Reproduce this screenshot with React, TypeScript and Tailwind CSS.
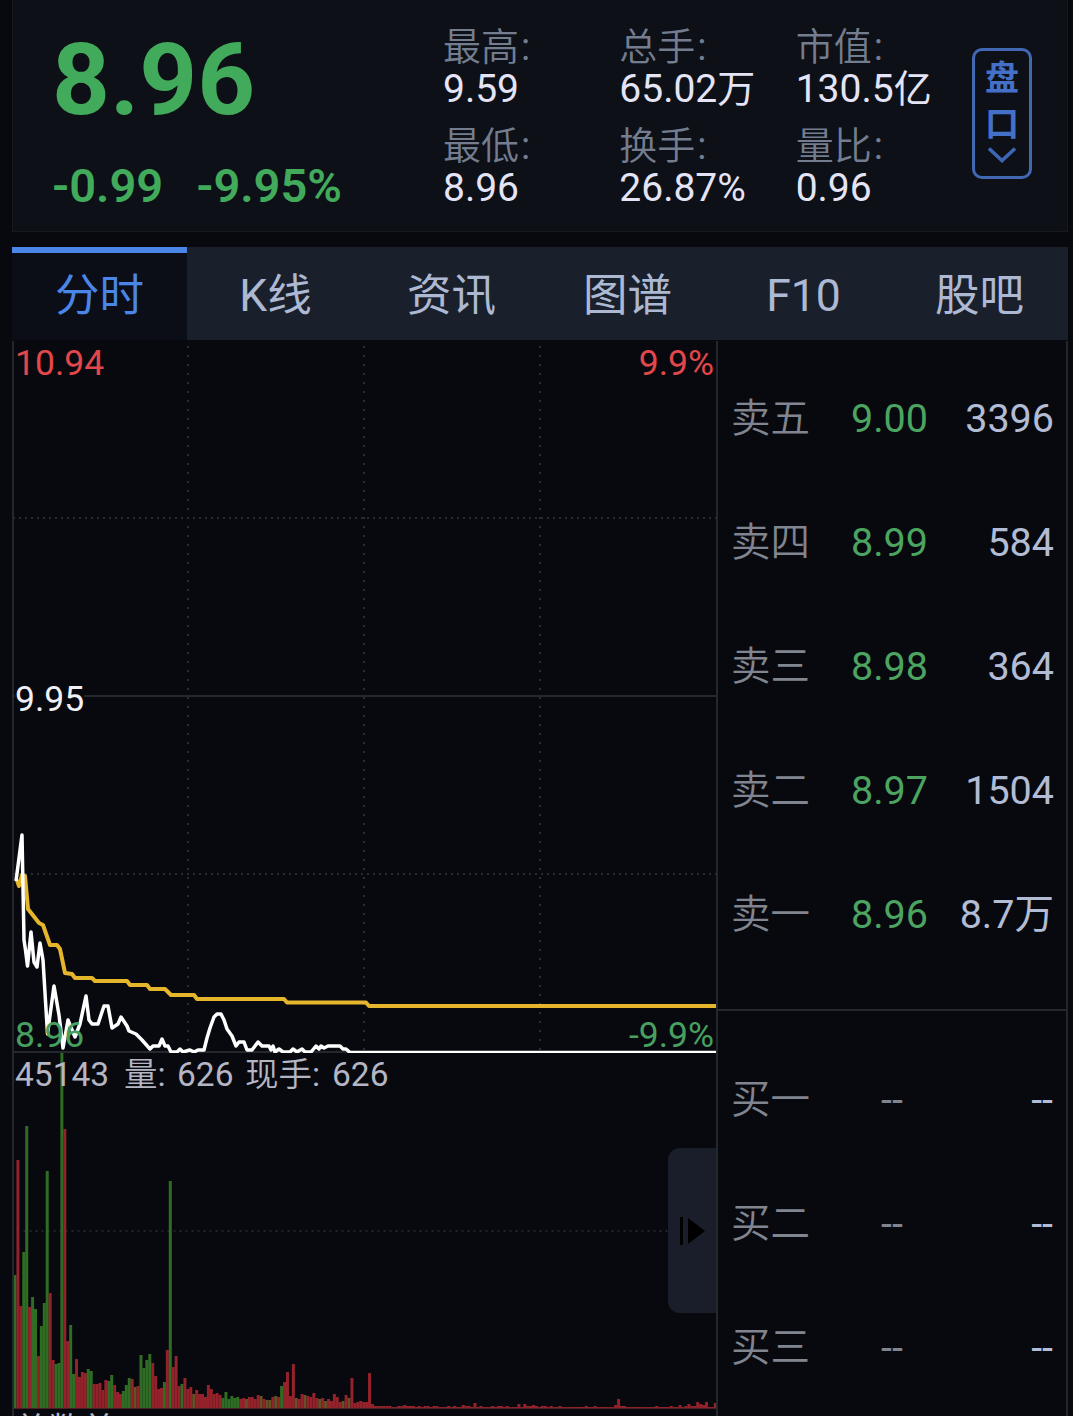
import { FC } from 'react'

const stats = [
	{ label: '最高', value: '9.59' },
	{ label: '总手', value: '65.02', unit: '万' },
	{ label: '市值', value: '130.5', unit: '亿' },
	{ label: '最低', value: '8.96' },
	{ label: '换手', value: '26.87%' },
	{ label: '量比', value: '0.96' },
]

const tabs = ['分时', 'K线', '资讯', '图谱', 'F10', '股吧']

const sells = [
	{ label: '卖五', price: '9.00', amount: '3396' },
	{ label: '卖四', price: '8.99', amount: '584' },
	{ label: '卖三', price: '8.98', amount: '364' },
	{ label: '卖二', price: '8.97', amount: '1504' },
	{ label: '卖一', price: '8.96', amount: '8.7', unit: '万' },
]

const buys = ['买一', '买二', '买三']

// chart points, relative to the top left corner of the price pane
const pricePoints =
	'3,540 9,494 11,599 12.5,609 14.5,625 18,591 21,621 24,626 27,602 30,619 34.5,693 41,645 46,674 50,707 55,679 62,696 67,683 73,655 76,679 79,683 85,683 91,665 95,665 99,687 105,683 108,676 114,685 116,690 123,693 129,699 137,708 140,705 146,705 149,698 152,705 155,705 158,711 164,711 167,708 170,711 177,709 181,711 185,709 191,709 194,697 197,687 201,676 204,673 208,673 211,679 214,688 219,695 223,705 226,701 231,701 234,709 239,709 245,701 249,705 256,705 258,709 260,705 262,711 266,708 270,711 277,711 280,708 284,711 289,708 292,711 298,711 303,705 306,708 308,705 311,707 315,705 327,705 330,708 333,708 337,711.5 704,711.5'
const averagePoints =
	'4,539 6,545 9,534 12,535 15,568 26,582 30,584 37,604 44,604 47,608 52,632 59,633 62,637 79,637 82,640 114,640 117,644 134,644 137,648 152,648 158,654 181,654 184,658 271,658 274,661.5 353,661.5 356,665 704,665'

// one bar per minute: colour and height
const volume =
	'g133 r248 r102 g156 g282 r101 g111 g99 r52 g82 g105 g237 r115 r48 g44 g45 g355 r279 r67 g83 g34 r49 r31 r36 r35 g39 g37 r24 r24 r25 r18 r28 g27 g33 r23 r16 r14 g17 g23 g30 r29 m21 r22 g53 g40 g48 g54 r45 r32 r19 r20 g26 r58 g227 r41 r52 r22 g24 r30 r19 ' +
	'r21 m14 r18 r14 r14 r11 r23 r19 r14 r15 r13 g10 g16 g9 g12 g10 g11 r9 r10 m9 r11 r11 r9 r13 m12 r9 m8 m8 r11 m12 r11 g22 r26 r36 r12 r44 m10 r9 r14 m13 r12 r11 r15 r10 m9 r10 m7 r9 r7 r14 r11 r6 m7 r13 m10 r30 r5 r6 r7 r6 ' +
	'r6 r35 r4 r2 r2 r2 r2 r2 r2 r1 r1 r2 r2 r3 r2 r2 r2 r1 r2 r1 r2 r2 r1 r2 r2 r1 r1 r1 r2 r1 r2 r1 r1 r3 r2 r2 r1 r5 r1 r2 r1 r1 r1 r2 r1 r2 r2 r1 r2 r1 r1 r1 r4 r1 r4 r2 r2 r3 r2 r1 ' +
	'r2 r2 r1 r2 r1 r1 r2 r1 r1 r1 r1 r1 r1 r1 r1 r2 r1 r1 r2 r1 r1 r1 r1 r1 r1 r3 r9 r2 r2 r1 r1 r1 r1 r1 r1 r1 r1 r1 r1 r2 r1 r1 r1 r1 r2 r1 r1 r3 r1 r2 r4 r2 r2 r6 r4 r3 r6 r1 r1 r5'

const barColors: Record<string, string> = { g: '#2f6d24', r: '#93222a', m: '#665026' }

const Header: FC = () => (
	<header className="flex h-[232px] border border-t-0 border-[#16181d] bg-[#0d1017]">
		<div className="w-[430px] pl-[39px] pt-[19px] text-[#41ab5b]">
			<div className="text-[101px] leading-[122px] font-bold">8.96</div>
			<div className="flex gap-[33px] pt-[17px] text-[47px] leading-[56px] font-semibold">
				<span>-0.99</span>
				<span>-9.95%</span>
			</div>
		</div>
		<div className="grid w-[529px] grid-cols-3 content-start pt-[26px]">
			{stats.map((s) => (
				<div key={s.label} className="h-[99px] whitespace-nowrap">
					<div className="text-[38px] leading-[42px] text-[#747d8f]">
						<span className="font-[350]">{s.label}</span>
						<span className="ml-0.5">:</span>
					</div>
					<div className="text-[39px] leading-[42px] text-[#e4e4f6]">
						{s.value}
						<span className="text-[38px] leading-none">{s.unit}</span>
					</div>
				</div>
			))}
		</div>
		<button className="mt-12 flex h-[131px] w-[60px] flex-col items-center rounded-[10px] border-[3px] border-[#4268b4] pt-1 text-[34px] leading-[46px] font-bold text-[#4470c8]">
			<span>盘</span>
			<span>口</span>
			<svg className="h-4 w-7" viewBox="0 0 28 16" fill="none" stroke="#3d67b5" strokeWidth="3.5">
				<path d="M1 1.5 14 13.5 27 1.5" />
			</svg>
		</button>
	</header>
)

const Tabs: FC = () => (
	<nav className="mt-[15px] grid h-[93px] grid-cols-6 bg-[#1a202b] text-[44.5px] text-[#adb9d3]">
		{tabs.map((tab, i) => (
			<button
				key={tab}
				className={
					i === 0
						? 'mr-px border-t-6 border-[#4a86e8] bg-[#0b0e16] text-[#4a86e8]'
						: 'border-t-6 border-transparent pr-px'
				}
			>
				{tab}
			</button>
		))}
	</nav>
)

const PriceChart: FC = () => (
	<div className="relative h-[712px] text-[35.5px] leading-[42px]">
		<svg className="block h-[712px] w-[702px]" viewBox="1 0 702 712" fill="none">
			<g stroke="#292c34" strokeWidth="2">
				<path d="M0 177H704M0 533H704" strokeDasharray="2 4" />
				<path d="M175 5V710M351 5V710M527 5V710" strokeDasharray="2 7" />
				<path d="M0 355H704M0 711H704" stroke="#24272e" />
			</g>
			<polyline points={averagePoints} stroke="#e5b52c" strokeWidth="4" strokeLinejoin="round" />
			<polyline points={pricePoints} stroke="#fff" strokeWidth="3.5" strokeLinejoin="round" />
		</svg>
		<span className="absolute top-px left-px text-[#e2474b]">10.94</span>
		<span className="absolute top-px right-0.5 text-[#e2474b]">9.9%</span>
		<span className="absolute top-[337px] left-px bg-[#08090e] text-[#f0f0f5]">9.95</span>
		<span className="absolute top-[673px] left-px text-[#48a060]">8.96</span>
		<span className="absolute top-[673px] right-0.5 text-[#48a060]">-9.9%</span>
	</div>
)

const VolumeChart: FC = () => (
	<div className="relative h-[356px]">
		<svg className="block h-[356px] w-[702px]" viewBox="0.5 0 702 356">
			<path d="M10 178H704" stroke="#20232a" strokeWidth="2" strokeDasharray="2 4" />
			{volume.split(' ').map((bar, i) => {
				const height = Number(bar.slice(1))
				return (
					<rect key={i} x={i * 2.93} y={355 - height} width="3" height={height} fill={barColors[bar[0]]} />
				)
			})}
			<path d="M0 355.5H704" stroke="#4a2024" />
		</svg>
		<div className="absolute top-0.5 left-px flex text-[33.5px] leading-10 whitespace-nowrap text-[#b4b6c4]">
			<span className="w-[109px]">45143</span>
			<span className="w-[53px]">
				<span className="font-[350]">量</span>:
			</span>
			<span className="w-[68px]">626</span>
			<span className="w-[87px]">
				<span className="font-[350]">现手</span>:
			</span>
			<span>626</span>
		</div>
		<div className="absolute top-[95px] right-0 flex h-[165px] w-12 items-center rounded-l-[12px] bg-[#1a1d2a] pl-3">
			<svg className="h-7 w-[26px]" viewBox="0 0 26 28">
				<path d="M0 0H3V28H0ZM8 1V27L25 14Z" fill="#000" />
			</svg>
		</div>
	</div>
)

const OrderBook: FC = () => (
	<aside className="w-[352px] border-x-2 border-[#24272e] text-[39.5px] text-[#b2bcd4]">
		<div className="h-[670px] border-b-2 border-[#24272e] pt-[16px]">
			{sells.map((row) => (
				<div key={row.label} className="flex h-[124px] items-center pr-3 pl-[13px]">
					<span className="w-[120px] text-[39.5px] font-[350] text-[#80858f]">{row.label}</span>
					<span className="text-[#4ba45f]">{row.price}</span>
					<span className="flex-1 text-right">
						{row.amount}
						<span>{row.unit}</span>
					</span>
				</div>
			))}
		</div>
		<div className="pt-[27px]">
			{buys.map((label) => (
				<div key={label} className="flex h-[124px] items-center pr-[13px] pl-[13px]">
					<span className="w-[150px] text-[39.5px] font-[350] text-[#80858f]">{label}</span>
					<span className="text-[#80858f]">--</span>
					<span className="flex-1 text-right">--</span>
				</div>
			))}
		</div>
	</aside>
)

const App: FC = () => {
	return (
		<div className="h-[1416px] w-[1073px] overflow-hidden bg-[#08090e] pr-[5px] pl-3 font-[Roboto,'Noto_Sans_CJK_SC',sans-serif]">
			<Header />
			<Tabs />
			<div className="mt-px flex h-[1075px] overflow-hidden">
				<main className="w-[704px] border-l-2 border-[#24272e]">
					<PriceChart />
					<VolumeChart />
					<div className="mt-px text-[34px] leading-10 text-[#b4b6c4]">总数差</div>
				</main>
				<OrderBook />
			</div>
		</div>
	)
}

export default App
